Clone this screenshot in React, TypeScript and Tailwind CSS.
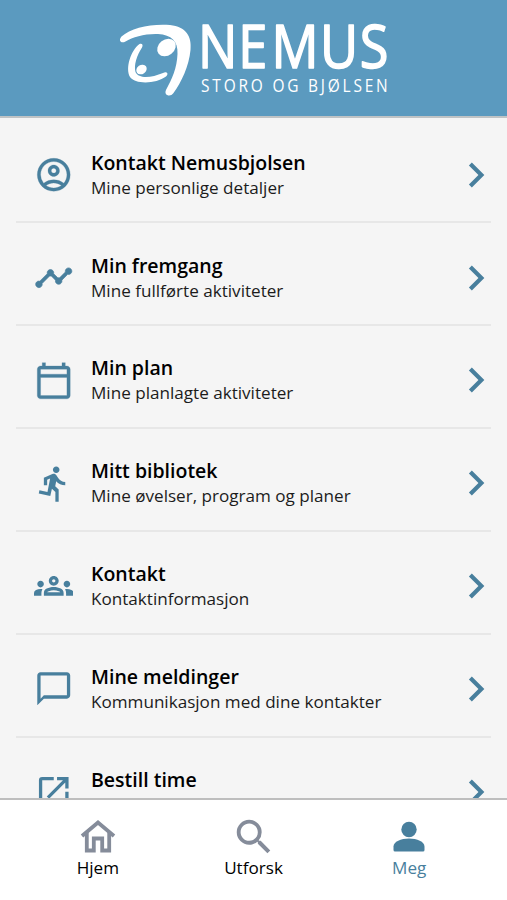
import type { IconType } from "react-icons";
import {
  MdChatBubbleOutline,
  MdChevronRight,
  MdDirectionsRun,
  MdOpenInNew,
  MdOutlineAccountCircle,
  MdOutlineCalendarToday,
  MdOutlineGroups,
  MdSearch,
  MdTimeline,
} from "react-icons/md";

interface MenuItem {
  title: string;
  subtitle?: string;
  icon: IconType;
  stroke?: number;
}

const menuItems: MenuItem[] = [
  { title: "Kontakt Nemusbjolsen", subtitle: "Mine personlige detaljer", icon: MdOutlineAccountCircle, stroke: 0.15 },
  { title: "Min fremgang", subtitle: "Mine fullførte aktiviteter", icon: MdTimeline, stroke: 0.4 },
  { title: "Min plan", subtitle: "Mine planlagte aktiviteter", icon: MdOutlineCalendarToday, stroke: 0.15 },
  { title: "Mitt bibliotek", subtitle: "Mine øvelser, program og planer", icon: MdDirectionsRun },
  { title: "Kontakt", subtitle: "Kontaktinformasjon", icon: MdOutlineGroups },
  { title: "Mine meldinger", subtitle: "Kommunikasjon med dine kontakter", icon: MdChatBubbleOutline },
  { title: "Bestill time", icon: MdOpenInNew },
];

function Logo() {
  return (
    <svg width="290" height="116" viewBox="110 0 290 116" fill="#fff" className="shrink-0">
      <path d="M122.500 36.500C132 28 152 23.500 171 25C187 27 193 36 191.500 50C190 66 182.500 82 174.500 93C171.500 97.500 164.500 95.500 167 90C173 79 178 68 178.500 54C179 41 172.500 35 159 34C146 33.500 134 37 126.500 41.500C122 44 119 40.500 122.500 36.500Z" />
      <ellipse cx="167.500" cy="47.500" rx="10" ry="8" transform="rotate(-38 167.500 47.500)" />
      <ellipse cx="142.500" cy="69.500" rx="5.500" ry="4.500" transform="rotate(-35 142.500 69.500)" />
      <path d="M140.500 44C143 43 144.500 45 143 47.500C138 55 134.500 65 136.500 72C140 79.500 153 77.500 164 73C168 71 170 74 167 76.500C157 84 136 84.500 131 77C126 68 132 50 140.500 44Z" />
      <text
        x="230 276.500 315 371 417"
        y="68.500"
        fontSize="60.500"
        transform="scale(0.865 1)"
        stroke="#fff"
        strokeWidth="1.600"
        strokeLinejoin="round"
        className="font-['Open_Sans',sans-serif]"
      >
        NEMUS
      </text>
      <text
        x="235"
        y="92"
        fontSize="18"
        textLength="217"
        transform="scale(0.86 1)"
        className="font-['Open_Sans',sans-serif]"
      >
        STORO OG BJØLSEN
      </text>
    </svg>
  );
}

function HomeIcon() {
  return (
    <svg width="36" height="34" viewBox="0 0 36 34" fill="none" stroke="currentColor" strokeWidth="3.800">
      <path d="M2 16L18 2.500L34 16" />
      <path d="M6.800 12.500V30.500H13.800V18.500H22.200V30.500H29.200V12.500" />
    </svg>
  );
}

function ProfileIcon() {
  return (
    <svg width="32" height="34" viewBox="0 0 32 34" fill="currentColor">
      <circle cx="16" cy="9.500" r="7.700" />
      <path d="M0.500 30V26.500C0.500 21.500 8 18.500 16 18.500S31.500 21.500 31.500 26.500V30Q31.500 31.500 30 31.500H2Q0.500 31.500 0.500 30Z" />
    </svg>
  );
}

function MenuRow({ item }: { item: MenuItem }) {
  const Icon = item.icon;
  return (
    <li className="flex h-[102.9px] shrink-0 items-center border-b-2 border-[#e7e7e7] pt-[8px]">
      <div className="flex w-[75px] justify-center">
        <Icon
          size={39.5}
          strokeWidth={item.stroke ?? 0}
          className="text-[#487f9d] [&>path[fill=none]]:stroke-none"
        />
      </div>
      <div className="flex-1">
        <div className="text-[19.5px] leading-[26px] font-semibold text-black">{item.title}</div>
        <div className="h-[24px] text-[17.1px] leading-[24px] text-[#1c1c1c]">{item.subtitle}</div>
      </div>
      <MdChevronRight size={50} className="-mr-[10px] text-[#487f9d]" />
    </li>
  );
}

export default function App() {
  return (
    <div className="flex h-[900px] w-[507px] flex-col overflow-hidden bg-[#f5f5f5] font-['Open_Sans',sans-serif]">
      <header className="flex h-[118px] shrink-0 justify-center border-b-2 border-[#bfc3c5] bg-[#5b9abf]">
        <Logo />
      </header>

      <ul className="flex min-h-0 flex-1 flex-col overflow-hidden pt-[2.2px] pr-4 pl-4">
        {menuItems.map((item) => (
          <MenuRow key={item.title} item={item} />
        ))}
      </ul>

      <nav className="flex h-[102px] shrink-0 border-t-2 border-[#bebebe] bg-white px-[20px] text-[17.1px] leading-6 text-black">
        <div className="flex flex-1 flex-col items-center pt-[17px]">
          <div className="flex h-[39px] items-center text-[#858c9a]">
            <HomeIcon />
          </div>
          Hjem
        </div>
        <div className="flex flex-1 flex-col items-center pt-[17px]">
          <div className="flex h-[39px] items-center text-[#858c9a]">
            <MdSearch size={46} />
          </div>
          Utforsk
        </div>
        <div className="flex flex-1 flex-col items-center pt-[17px] text-[#487f9d]">
          <div className="flex h-[39px] items-center">
            <ProfileIcon />
          </div>
          Meg
        </div>
      </nav>
    </div>
  );
}
